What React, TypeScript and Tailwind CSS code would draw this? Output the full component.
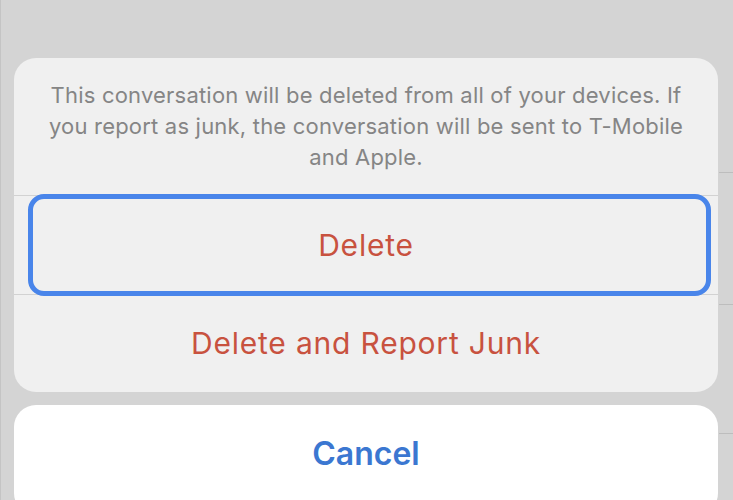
export default function App() {
    return (
        <div
            className="relative w-[733px] h-[500px] overflow-hidden bg-[#d4d4d4] border-l border-l-[#c4c4c4]"
            style={{ fontFamily: "Inter, 'Liberation Sans', sans-serif" }}
        >
            {/* faint list separators behind the sheet */}
            <div className="absolute right-0 top-[172px] w-[14px] h-px bg-[#bdbdbd]" />
            <div className="absolute right-0 top-[304px] w-[14px] h-px bg-[#bdbdbd]" />
            <div className="absolute right-0 top-[433px] w-[14px] h-px bg-[#bdbdbd]" />

            <div className="relative pt-[58px] pl-[13px] pr-[15px] flex flex-col gap-[13px]">
                {/* action sheet */}
                <div className="bg-[#f0f0f0] rounded-[22px] overflow-hidden">
                    <p className="px-[22px] pt-[22px] pb-[22px] text-center text-[22px] leading-[31px] text-[#858585] tracking-[0.2px]">
                        This conversation will be deleted from all of your devices. If you report as junk, the conversation will be sent to T-Mobile and Apple.
                    </p>
                    <div className="h-px bg-[#d2d2d2]" />
                    <div className="relative h-[98px] flex items-center justify-center">
                        <span className="text-[30px] tracking-[0.8px] text-[#c8523f]">Delete</span>
                        <div className="absolute -top-[2px] -bottom-[2px] left-[14px] right-[7px] rounded-[16px] border-[5px] border-[#4985ea]" />
                    </div>
                    <div className="h-px bg-[#d2d2d2]" />
                    <div className="h-[97px] flex items-center justify-center">
                        <span className="text-[30px] tracking-[0.8px] text-[#c8523f]">Delete and Report Junk</span>
                    </div>
                </div>

                {/* cancel */}
                <div className="bg-white rounded-[22px] h-[110px] flex items-start justify-center pt-[29px]">
                    <span className="text-[32px] leading-[40px] font-semibold text-[#3b77d1]">Cancel</span>
                </div>
            </div>
        </div>
    );
}
